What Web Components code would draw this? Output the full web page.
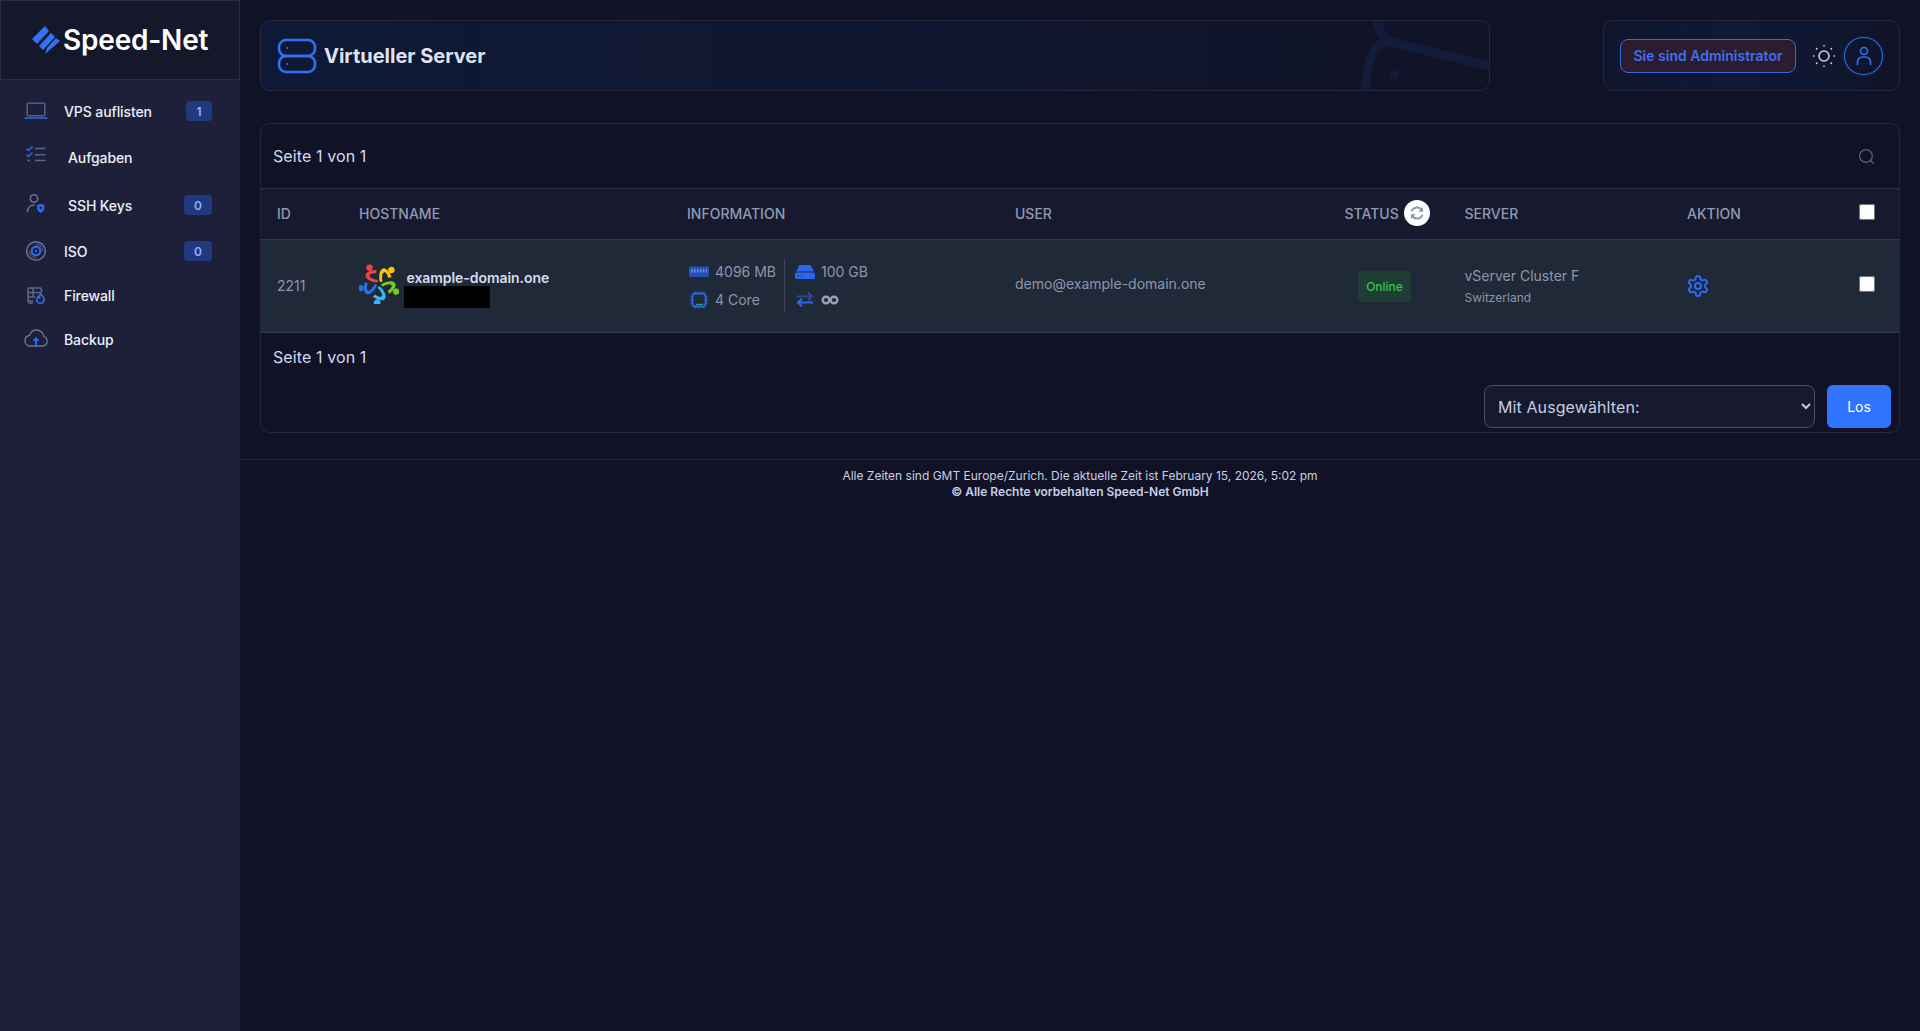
<!DOCTYPE html>
<html lang="de">
<head>
<meta charset="utf-8">
<title>Virtueller Server</title>
<style>
    html, body { margin: 0; padding: 0; background: #111226; font-family: Inter, "Noto Sans", sans-serif; }
</style>
</head>
<body>
<app-shell>
    <side-bar slot="sidebar" brand="Speed-Net">
        <nav-item label="VPS auflisten" badge="1" row="46" gap="14" badge-width="26">
            <svg slot="icon" width="28" height="28" viewBox="0 0 28 28" fill="none"><rect x="5.200" y="6.200" width="17.600" height="12.600" rx="1" stroke="#4f5f90" stroke-width="1.500"/><path d="M2.500 21h23" stroke="#2b6af0" stroke-width="1.500"/></svg>
        </nav-item>
        <nav-item label="Aufgaben" row="46" gap="18">
            <svg slot="icon" width="28" height="28" viewBox="0 0 28 28" fill="none"><path d="M4.500 5.500l2 2 4-4M4.500 11.500l2 2 4-4" stroke="#2b6af0" stroke-width="1.500"/><circle cx="6.500" cy="17.500" r="1.100" fill="#6b7390"/><path d="M13 5.500h10.500M13 11.700h10.500M13 17.500h10.500" stroke="#5d6484" stroke-width="1.500"/></svg>
        </nav-item>
        <nav-item label="SSH Keys" badge="0" row="50" gap="18" badge-width="28">
            <svg slot="icon" width="28" height="28" viewBox="0 0 28 28" fill="none"><circle cx="12" cy="7.500" r="3.700" stroke="#6b7390" stroke-width="1.500"/><path d="M5.500 20.500c0-4 3-6.500 7-6.500" stroke="#6b7390" stroke-width="1.500" stroke-linecap="round"/><path d="M18.700 12.800l3.600 1.300v3c0 2.500-1.600 4-3.600 4.900-2-.9-3.600-2.400-3.600-4.900v-3z" fill="#2b6af0"/><circle cx="18.700" cy="16.800" r="1.300" fill="#1e203a"/></svg>
        </nav-item>
        <nav-item label="ISO" badge="0" row="42" gap="14" badge-width="28">
            <svg slot="icon" width="28" height="28" viewBox="0 0 28 28" fill="none"><circle cx="14" cy="14" r="9.300" stroke="#6b7390" stroke-width="1.500"/><path d="M14 7.200a6.800 6.800 0 0 1 6.800 6.800M14 20.800a6.800 6.800 0 0 1-6.800-6.800" stroke="#474e6c" stroke-width="1.500"/><circle cx="14" cy="14" r="4.300" stroke="#2b6af0" stroke-width="2.200"/><circle cx="14" cy="14" r="1.200" fill="#2b6af0"/></svg>
        </nav-item>
        <nav-item label="Firewall" row="46" gap="14">
            <svg slot="icon" width="28" height="28" viewBox="0 0 28 28" fill="none"><g transform="translate(0 2)"><path d="M11 20H7.500A1.500 1.500 0 0 1 6 18.500v-12A1.500 1.500 0 0 1 7.500 5h10.500A1.500 1.500 0 0 1 19.500 6.500V9M6 9.500h13.500M6 14h7M11 5v9M6 18h5" stroke="#5f6685" stroke-width="1.500"/><path d="M18.500 10.500c.5 2 3.700 3 3.700 6a3.800 3.800 0 0 1-7.600 0c0-1.500 1-2.500 1.800-3.200.2 1 .7 1.400 1.200 1.500-.2-1.600.2-3.200.9-4.300z" stroke="#2b6af0" stroke-width="1.700" stroke-linejoin="round"/></g></svg>
        </nav-item>
        <nav-item label="Backup" row="42" gap="14">
            <svg slot="icon" width="28" height="28" viewBox="0 0 28 28" fill="none"><path d="M8 21h12.500a4.800 4.800 0 0 0 1.500-9.300C21.500 8 18 5 14.500 5c-3.300 0-6 2.200-6.800 5.300C5 10.800 3 13 3 15.800 3 18.800 5.200 21 8 21z" stroke="#6b7390" stroke-width="1.400"/><path d="M14 20v-6.500" stroke="#2b6af0" stroke-width="2"/><path d="M10.400 15.800L14 12l3.600 3.800z" fill="#2b6af0"/></svg>
        </nav-item>
    </side-bar>

    <top-bar heading="Virtueller Server" role-label="Sie sind Administrator"></top-bar>
    <server-table user="demo@example-domain.one" vps-id="2211" host="example-domain.one"></server-table>
    <page-footer>
        Alle Zeiten sind GMT Europe/Zurich. Die aktuelle Zeit ist February 15, 2026, 5:02 pm
        <strong slot="copy">© Alle Rechte vorbehalten Speed-Net GmbH</strong>
    </page-footer>
</app-shell>

<script>
class AppShell extends HTMLElement {
    constructor() {
        super();
        this.attachShadow({ mode: 'open' });
        this.shadowRoot.innerHTML = `
            <style>
                :host { display: flex; min-height: 100vh; background: #111226; }
                .sidebar { flex: 0 0 240px; display: flex; background: #1e203a; }
                .main { flex: 1; min-width: 0; }
            </style>
            <div class="sidebar"><slot name="sidebar"></slot></div>
            <div class="main"><slot></slot></div>
        `;
    }
}

class SideBar extends HTMLElement {
    constructor() {
        super();
        this.attachShadow({ mode: 'open' });
    }

    connectedCallback() {
        const brand = this.getAttribute('brand') || '';
        this.shadowRoot.innerHTML = `
            <style>
                :host { display: block; width: 240px; }
                .logo {
                    height: 78px;
                    display: flex;
                    align-items: center;
                    padding-left: 31px;
                    gap: 3px;
                    background: #15172b;
                    border: 1px solid #282c47;
                    box-sizing: content-box;
                    width: 207px;
                }
                .brand { font-size: 28px; font-weight: 600; color: #fff; letter-spacing: -0.2px; }
                nav { padding-top: 8px; display: flex; flex-direction: column; }
            </style>
            <div class="logo">
                <svg width="28" height="28" viewBox="0 0 28 28" fill="#3472f5">
                    <polygon points="0,13 13,0 17,5 5,18"/>
                    <polygon points="7,20 19,7 23,11 11,24"/>
                    <polygon points="13,28 15,22 24,12 28,15"/>
                </svg>
                <span class="brand">${brand}</span>
            </div>
            <nav><slot></slot></nav>
        `;
    }
}

class NavItem extends HTMLElement {
    constructor() {
        super();
        this.attachShadow({ mode: 'open' });
    }

    connectedCallback() {
        const label = this.getAttribute('label') || '';
        const badge = this.getAttribute('badge');
        const row = this.getAttribute('row') || '46';
        const gap = this.getAttribute('gap') || '14';
        const badgeWidth = this.getAttribute('badge-width') || '26';
        this.shadowRoot.innerHTML = `
            <style>
                :host {
                    display: flex;
                    align-items: center;
                    height: ${row}px;
                    padding: 0 28px 0 22px;
                    font-size: 14px;
                    font-weight: 500;
                    letter-spacing: -0.1px;
                    color: #eceef8;
                }
                .icon { display: flex; width: 28px; height: 28px; margin-right: ${gap}px; }
                .label { flex: 1; }
                .badge {
                    width: ${badgeWidth}px;
                    height: 20px;
                    border-radius: 4px;
                    background: #20397f;
                    color: #8cb0ff;
                    font-size: 12px;
                    font-weight: 600;
                    display: flex;
                    align-items: center;
                    justify-content: center;
                }
            </style>
            <span class="icon"><slot name="icon"></slot></span>
            <span class="label">${label}</span>
            ${badge !== null ? `<span class="badge">${badge}</span>` : ''}
        `;
    }
}

class TopBar extends HTMLElement {
    constructor() {
        super();
        this.attachShadow({ mode: 'open' });
    }

    connectedCallback() {
        const heading = this.getAttribute('heading') || '';
        const roleLabel = this.getAttribute('role-label') || '';
        this.shadowRoot.innerHTML = `
            <style>
                :host { display: flex; justify-content: space-between; padding: 20px 20px 0 20px; }
                .card {
                    box-sizing: border-box;
                    height: 71px;
                    border: 1px solid #23283e;
                    border-radius: 10px;
                    display: flex;
                    align-items: center;
                    position: relative;
                    overflow: hidden;
                }
                .title {
                    width: 1230px;
                    padding-left: 16px;
                    background: linear-gradient(90deg, #0f1935 0%, #101730 50%, #111327 100%);
                }
                .title svg.mark { width: 40px; height: 36px; flex: none; margin-right: 7px; }
                h1 { margin: 0; font-size: 20px; font-weight: 700; color: #dfe3f1; }
                .water { position: absolute; right: 0; top: 0; }
                .tools {
                    width: 297px;
                    padding-left: 16px;
                    background: linear-gradient(90deg, #10162d 0%, #0f1935 45%, #10142a 100%);
                }
                .role {
                    box-sizing: border-box;
                    width: 176px;
                    height: 34px;
                    border: 1px solid #3a66e0;
                    border-radius: 8px;
                    background: #2b1d2f;
                    color: #3f6ff0;
                    font-size: 14px;
                    font-weight: 600;
                    display: flex;
                    align-items: center;
                    justify-content: center;
                    white-space: nowrap;
                }
                .sun { margin: 0 8px 0 16px; flex: none; }
                .avatar {
                    box-sizing: border-box;
                    width: 39px;
                    height: 38px;
                    border: 1px solid #2f6fed;
                    border-radius: 50%;
                    display: flex;
                    align-items: center;
                    justify-content: center;
                    box-shadow: 0 0 3px #2f6fed66;
                }
            </style>
            <div class="card title">
                <svg class="mark" viewBox="0 0 40 36" fill="none" stroke="#2f73f5" stroke-width="2.600">
                    <rect x="2" y="2" width="36" height="16" rx="7"/>
                    <rect x="2" y="18" width="36" height="16" rx="7"/>
                    <circle cx="10" cy="10" r=".6" fill="#2f73f5" stroke-width="1"/>
                    <circle cx="10" cy="26" r=".6" fill="#2f73f5" stroke-width="1"/>
                </svg>
                <h1>${heading}</h1>
                <svg class="water" width="170" height="70" viewBox="0 0 170 70" fill="none" stroke="#131c38" stroke-width="9">
                    <path d="M58 -5C59 8 64 17 72 21L175 46"/>
                    <path d="M72 21C52 20 47 45 46 75"/>
                    <circle cx="75" cy="54" r="4.500" fill="#131c38" stroke="none"/>
                </svg>
            </div>
            <div class="card tools">
                <div class="role">${roleLabel}</div>
                <svg class="sun" width="24" height="24" viewBox="0 0 24 24" fill="none" stroke="#d4d6de" stroke-linecap="round">
                    <circle cx="12" cy="12" r="5" stroke-width="1.500"/>
                    <path stroke-width="1.500" d="M12 1.500v.5M12 22v.5M1.500 12h.5M22 12h.5M4.600 4.600l.3.3M19.100 19.100l.3.3M4.600 19.400l.3-.3M19.100 4.900l.3-.3"/>
                </svg>
                <div class="avatar">
                    <svg width="20" height="22" viewBox="0 0 20 22" fill="none" stroke="#2f73f5" stroke-width="1.600" stroke-linecap="round">
                        <circle cx="10" cy="6" r="3.500"/>
                        <path d="M3.500 19.500v-2.500a5 5 0 0 1 5-5h3a5 5 0 0 1 5 5v2.500"/>
                    </svg>
                </div>
            </div>
        `;
    }
}

class HostLogo extends HTMLElement {
    constructor() {
        super();
        this.attachShadow({ mode: 'open' });
    }

    connectedCallback() {
        // five figures turned around the middle
        const colors = ['#ee4343', '#f7c400', '#74cc18', '#3fb4f4', '#2a6fdd'];
        const figures = colors.map((color, i) => `
            <g transform="rotate(${i * 72} 20 20)" fill="${color}">
                <circle cx="10.500" cy="3.800" r="3.200"/>
                <path d="M17.500 6C11 6 6 8.500 6.500 12 7 15 11.500 18 18.500 18.500L19 16C15.500 15.500 10.500 14 10.500 11.800 10.500 10 14 9 17 9.300Z"/>
            </g>
        `).join('');
        this.shadowRoot.innerHTML = `
            <style>:host { display: block; width: 40px; height: 40px; flex: none; }</style>
            <svg width="40" height="40" viewBox="0 0 40 40">${figures}</svg>
        `;
    }
}

class ServerTable extends HTMLElement {
    constructor() {
        super();
        this.attachShadow({ mode: 'open' });
    }

    connectedCallback() {
        const user = this.getAttribute('user') || '';
        const vpsId = this.getAttribute('vps-id') || '';
        const host = this.getAttribute('host') || '';
        this.shadowRoot.innerHTML = `
            <style>
                :host { display: block; margin: 32px 20px 0 20px; }
                .card {
                    box-sizing: border-box;
                    height: 310px;
                    border: 1px solid #23283e;
                    border-radius: 10px;
                    overflow: hidden;
                }
                .pager { font-size: 16px; letter-spacing: .1px; color: #d3daee; padding-left: 12px; display: flex; align-items: center; }
                .top { height: 64px; justify-content: space-between; padding-right: 23px; }
                .under { height: 48px; }
                table { width: 100%; border-collapse: collapse; table-layout: fixed; }
                th, td { padding: 0 0 0 16px; text-align: left; }
                thead tr { height: 51px; background: #171a2f; border-top: 1px solid #2a2f45; border-bottom: 1px solid #343a50; }
                th { font-size: 14px; font-weight: 500; color: #8f9ab2; text-transform: uppercase; padding-bottom: 2px; }
                th.check { padding-bottom: 0; }
                tbody tr { height: 93px; background: #202938; border-bottom: 1px solid #343a50; }
                td { font-size: 14px; color: #8d95ab; }
                td.id { padding-bottom: 2px; }
                td.user { padding-bottom: 5px; }
                .status-head { display: flex; align-items: center; gap: 5px; }
                .refresh {
                    width: 26px; height: 26px; border-radius: 50%; background: #fff;
                    display: flex; align-items: center; justify-content: center;
                }
                .hostcell { display: flex; align-items: flex-start; gap: 5px; }
                .hosttext { padding-top: 4.5px; }
                .name { display: block; font-weight: 600; color: #d5dcf0; line-height: 17px; margin-left: 2.5px; letter-spacing: -0.06px; }
                .redacted { display: block; width: 86px; height: 22px; background: #000; margin-top: .5px; }
                .info { display: flex; align-items: center; }
                .spec { display: grid; grid-template-columns: 20px auto; column-gap: 6px; row-gap: 11px; align-items: center; line-height: 16px; }
                .spec svg { display: block; }
                .left { padding: 5px 8px 4px 2px; border-right: 1px solid #3d4557; }
                .right { padding: 5px 0 4px 10px; }
                .badge {
                    display: inline-flex; align-items: center; justify-content: center;
                    width: 53px; height: 31px; margin-left: 13.5px; border-radius: 4px;
                    background: #1f3d33; color: #35c24f; font-size: 12px; font-weight: 500;
                }
                .cluster { display: block; line-height: 17px; }
                .country { display: block; font-size: 12px; line-height: 15px; margin-top: 6px; }
                .gear { display: block; margin-left: -1px; }
                input[type=checkbox] { width: 16px; height: 16px; margin: 0 0 4px 0; display: block; }
                .actions { display: flex; justify-content: flex-end; gap: 12px; padding-right: 8px; margin-top: 4px; }
                select {
                    width: 331px; height: 43px; padding: 0 8px 0 9px;
                    background: #171a2e; color: #c6cde0;
                    border: 1px solid #4b4f62; border-radius: 8px;
                    font: 16px Inter, sans-serif;
                    letter-spacing: .1px;
                    color-scheme: dark;
                }
                button {
                    width: 64px; height: 43px; border: 0; border-radius: 6px;
                    background: #2f73ff; color: #fff;
                    font: 400 14px Inter, sans-serif;
                }
            </style>
            <div class="card">
                <div class="pager top">
                    <span>Seite 1 von 1</span>
                    <svg width="19" height="19" viewBox="0 0 18 18" fill="none" stroke="#5b5e70" stroke-width="1.300" stroke-linecap="round"><circle cx="8.500" cy="8.500" r="6"/><path d="M13 13l2.500 2.500"/></svg>
                </div>
                <table>
                    <colgroup>
                        <col style="width:82px"><col style="width:328px"><col style="width:328px"><col style="width:329.5px">
                        <col style="width:120px"><col style="width:222.5px"><col style="width:172px"><col>
                    </colgroup>
                    <thead>
                        <tr>
                            <th>ID</th><th>Hostname</th><th>Information</th><th>User</th>
                            <th>
                                <div class="status-head">Status
                                    <span class="refresh">
                                        <svg width="16" height="16" viewBox="0 0 24 24" fill="none" stroke="#9198a8" stroke-width="3"><path d="M20 9.500A8.500 8.500 0 0 0 5.200 7L3.500 9"/><path d="M21 3v7h-7" stroke-width="0" fill="#9198a8"/><path d="M4 14.500A8.500 8.500 0 0 0 18.800 17l1.700-2"/><path d="M3 21v-7h7" stroke-width="0" fill="#9198a8"/></svg>
                                    </span>
                                </div>
                            </th>
                            <th>Server</th><th>Aktion</th>
                            <th class="check"><input type="checkbox" aria-label="Alle"></th>
                        </tr>
                    </thead>
                    <tbody>
                        <tr>
                            <td class="id">${vpsId}</td>
                            <td>
                                <div class="hostcell">
                                    <host-logo></host-logo>
                                    <div class="hosttext"><span class="name">${host}</span><span class="redacted"></span></div>
                                </div>
                            </td>
                            <td>
                                <div class="info">
                                    <div class="spec left">
                                        <svg width="20" height="14" viewBox="0 0 20 14" fill="#2450b8"><path d="M0 1.500h20v8.500h-.5v2h-19v-2H0z"/><path fill="#6d8fdc" d="M2 4h1.500v3.500H2zM5 4h1.500v3.500H5zM8 4h1.500v3.500H8zM11 4h1.500v3.500H11zM14 4h1.500v3.500H14zM17 4h1v3.500h-1z"/></svg>
                                        <span>4096 MB</span>
                                        <svg width="20" height="18" viewBox="0 0 20 18" fill="none" stroke="#2a66e6"><rect x="3.500" y="2.500" width="13" height="13" rx="2.500" stroke-width="1.800"/><path stroke="#2a9a66" stroke-width="1.500" d="M7 13.500h7"/><path stroke-width="1.200" d="M6 .5v2M9 .5v2M12 .5v2M15 .5v2M6 15.500v2M9 15.500v2M12 15.500v2M15 15.500v2M1 6h2M1 9h2M1 12h2M17 6h2M17 9h2M17 12h2"/></svg>
                                        <span>4 Core</span>
                                    </div>
                                    <div class="spec right">
                                        <svg width="20" height="14" viewBox="0 0 20 14" fill="#2a66f0"><path d="M4.500 0h11L19 6.500H1z"/><path d="M1.500 7.500h17A1.500 1.500 0 0 1 20 9v3.500a1.500 1.500 0 0 1-1.500 1.500h-17A1.500 1.500 0 0 1 0 12.500V9a1.500 1.500 0 0 1 1.500-1.500z"/><path fill="#1a4ab0" d="M3 10h1v1.500H3zM5.500 10h1v1.500h-1z"/></svg>
                                        <span>100 GB</span>
                                        <svg width="20" height="18" viewBox="0 0 20 18" fill="none" stroke-width="2"><path stroke="#2a4a90" d="M2 5.500h15M13 1.500l4 4-4 4"/><path stroke="#2a66f0" d="M18 11.500H3M7 7.500l-4 4 4 4"/></svg>
                                        <svg width="18" height="10" viewBox="0 0 18 10" fill="none" stroke="#9aa0b5" stroke-width="2.400"><circle cx="5" cy="5" r="3.300"/><circle cx="13" cy="5" r="3.300"/></svg>
                                    </div>
                                </div>
                            </td>
                            <td class="user">${user}</td>
                            <td><span class="badge">Online</span></td>
                            <td><span class="cluster">vServer Cluster F</span><span class="country">Switzerland</span></td>
                            <td>
                                <svg class="gear" width="24" height="24" viewBox="0 0 24 24" fill="none" stroke="#2a6af5" stroke-width="2" stroke-linecap="round" stroke-linejoin="round"><path d="M12.220 2h-.44a2 2 0 0 0-2 2v.18a2 2 0 0 1-1 1.730l-.43.25a2 2 0 0 1-2 0l-.15-.08a2 2 0 0 0-2.730.73l-.22.38a2 2 0 0 0 .73 2.730l.15.1a2 2 0 0 1 1 1.720v.51a2 2 0 0 1-1 1.740l-.15.09a2 2 0 0 0-.73 2.730l.22.38a2 2 0 0 0 2.730.73l.15-.08a2 2 0 0 1 2 0l.43.25a2 2 0 0 1 1 1.730V20a2 2 0 0 0 2 2h.44a2 2 0 0 0 2-2v-.18a2 2 0 0 1 1-1.730l.43-.25a2 2 0 0 1 2 0l.15.08a2 2 0 0 0 2.730-.73l.22-.39a2 2 0 0 0-.73-2.730l-.15-.08a2 2 0 0 1-1-1.740v-.5a2 2 0 0 1 1-1.740l.15-.09a2 2 0 0 0 .73-2.730l-.22-.38a2 2 0 0 0-2.730-.73l-.15.08a2 2 0 0 1-2 0l-.43-.25a2 2 0 0 1-1-1.730V4a2 2 0 0 0-2-2z"/><circle cx="12" cy="12" r="3"/></svg>
                            </td>
                            <td><input type="checkbox" aria-label="2211"></td>
                        </tr>
                    </tbody>
                </table>
                <div class="pager under">Seite 1 von 1</div>
                <div class="actions">
                    <select aria-label="Aktion"><option>Mit Ausgewählten:</option></select>
                    <button type="button">Los</button>
                </div>
            </div>
        `;
    }
}

class PageFooter extends HTMLElement {
    constructor() {
        super();
        this.attachShadow({ mode: 'open' });
        this.shadowRoot.innerHTML = `
            <style>
                :host {
                    display: block;
                    margin-top: 26px;
                    padding-top: 8px;
                    border-top: 1px solid #1f2338;
                    text-align: center;
                    font-size: 12px;
                    line-height: 16px;
                    color: #c8cfe5;
                }
                ::slotted(strong) { display: block; font-weight: 600; }
            </style>
            <slot></slot>
            <slot name="copy"></slot>
        `;
    }
}

customElements.define('app-shell', AppShell);
customElements.define('side-bar', SideBar);
customElements.define('nav-item', NavItem);
customElements.define('top-bar', TopBar);
customElements.define('host-logo', HostLogo);
customElements.define('server-table', ServerTable);
customElements.define('page-footer', PageFooter);
</script>
</body>
</html>
